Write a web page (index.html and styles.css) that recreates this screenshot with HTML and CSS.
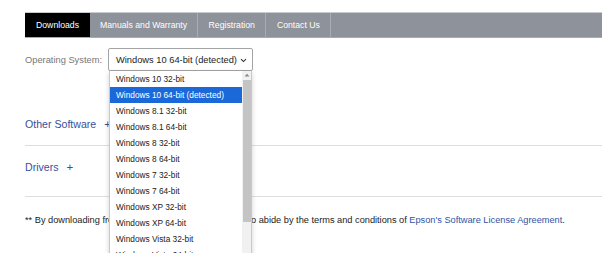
FILE: index.html
```html
<!DOCTYPE html>
<html>
<head>
<meta charset="utf-8">
<link rel="stylesheet" href="styles.css">
</head>
<body>
<div class="page">
  <nav class="tabs">
    <div class="tab active">Downloads</div>
    <div class="tab">Manuals and Warranty</div>
    <div class="tab">Registration</div>
    <div class="tab">Contact Us</div>
  </nav>
  <div class="os-row">
    <span class="os-label">Operating System:</span>
    <div class="select">
      <span>Windows 10 64-bit (detected)</span>
      <svg class="chev" width="7" height="5" viewBox="0 0 7 5"><path d="M1 1.2 L3.5 3.6 L6 1.2" fill="none" stroke="#333" stroke-width="1.1"/></svg>
    </div>
  </div>
  <div class="section other"><span class="sec-title">Other Software</span><span class="plus">+</span></div>
  <div class="section drivers"><span class="sec-title">Drivers</span><span class="plus">+</span></div>
  <p class="note">** By downloading from this website, you are agreeing to abide by the terms and conditions of <a class="link">Epson's Software License Agreement</a>.</p>

  <div class="dropdown">
    <ul class="options">
      <li>Windows 10 32-bit</li>
      <li class="sel">Windows 10 64-bit (detected)</li>
      <li>Windows 8.1 32-bit</li>
      <li>Windows 8.1 64-bit</li>
      <li>Windows 8 32-bit</li>
      <li>Windows 8 64-bit</li>
      <li>Windows 7 32-bit</li>
      <li>Windows 7 64-bit</li>
      <li>Windows XP 32-bit</li>
      <li>Windows XP 64-bit</li>
      <li>Windows Vista 32-bit</li>
      <li>Windows Vista 64-bit</li>
    </ul>
    <div class="scrollbar">
      <svg class="up" width="6" height="4" viewBox="0 0 6 4"><path d="M0.5 3.5 L3 0.8 L5.5 3.5 Z" fill="#8a8a8a"/></svg>
      <div class="thumb"></div>
    </div>
  </div>
</div>
</body>
</html>
```
FILE: styles.css
```css
* { box-sizing: border-box; }
html, body { margin: 0; padding: 0; background: #fff; }
body { font-family: "Liberation Sans", Arial, sans-serif; color: #333; overflow: hidden; width: 602px; height: 253px; }
.page { position: relative; padding: 12px 0 0 25px; height: 253px; }
.tabs {
  display: flex;
  height: 26px;
  background: #8e929a;
  border-top: 1px solid #c9cbce;
  border-bottom: 1px solid #a7abb0;
}
.tab {
  display: flex; align-items: center;
  padding: 0 10.5px;
  font-size: 8.7px;
  color: #fff;
  border-right: 1px solid #a9adb3;
}
.tab.active { background: #000; border-right: none; padding: 0 11px; }
.tab:nth-child(2) { padding: 0 10px; }
.os-row { display: flex; align-items: center; margin-top: 10px; height: 23px; }
.os-label { font-size: 9.3px; color: #777; width: 83px; }
.select {
  display: flex; align-items: center; justify-content: space-between;
  width: 145px; height: 23px;
  border: 1px solid #a4a4a4; border-radius: 2px;
  padding: 0 5px 0 7px;
  font-size: 9.3px; color: #222;
  background: #fff;
}
.chev { margin-top: 1px; }
.section {
  display: flex; align-items: center;
  width: 577px;
  border-bottom: 1px solid #dedede;
}
.section.other { margin-top: 32px; height: 43px; }
.section.drivers { height: 51px; padding-bottom: 8px; }
.sec-title { font-size: 10.6px; color: #3a4f9b; }
.plus { font-size: 11.5px; color: #3a4f9b; margin-left: 8px; }
.note { margin: 18px 0 0; font-size: 9.22px; line-height: 11px; color: #222; }
.link { color: #2f54a5; }
.dropdown {
  position: absolute; left: 109px; top: 71px;
  width: 143px; height: 190px;
  background: #fff;
  border-left: 1px solid #c9c9c9;
  border-right: 1px solid #c9c9c9;
  box-shadow: 0 2px 5px rgba(0,0,0,0.18);
  display: flex;
}
.options { list-style: none; margin: 0; padding: 0; flex: 1; }
.options li {
  height: 16px; line-height: 16px;
  padding-left: 6px;
  font-size: 8.3px; color: #222;
  white-space: nowrap; overflow: hidden;
}
.options li.sel { background: #1b68d9; color: #fff; }
.scrollbar { width: 9px; background: #f1f1f1; position: relative; }
.up { position: absolute; left: 1.5px; top: 2px; }
.thumb { position: absolute; left: 0.5px; right: 0.5px; top: 9px; height: 142px; background: #c4c4c4; }
```
